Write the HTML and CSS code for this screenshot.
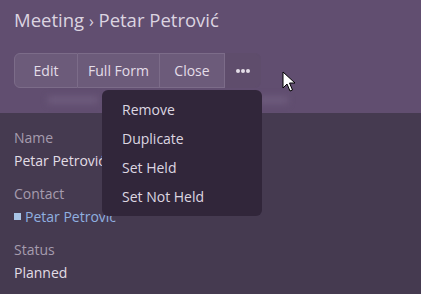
FILE: index.html
```html
<!DOCTYPE html>
<html lang="en">
  <head>
    <meta charset="UTF-8" />
    <title>Meeting - Petar Petrović</title>
    <link rel="stylesheet" href="styles.css">
  </head>
  <body>
    <!-- Header -->
    <div class="page-header">
      <h3 class="title">Meeting <span class="sep">›</span> Petar Petrović</h3>
      <div class="actions">
        <div class="btn-group">
          <button class="btn">Edit</button>
          <button class="btn">Full Form</button>
          <button class="btn">Close</button>
          <button class="btn btn-more active"><span class="dot"></span><span class="dot"></span><span class="dot"></span></button>
          <ul class="dropdown-menu">
            <li>Remove</li>
            <li>Duplicate</li>
            <li>Set Held</li>
            <li>Set Not Held</li>
          </ul>
        </div>
      </div>
      <!-- blurred tab row behind the menu -->
      <div class="ghost">
        <span class="blob" style="width: 50px"></span>
        <span class="blob" style="width: 30px; margin-left: 160px"></span>
      </div>
    </div>

    <!-- Record -->
    <div class="record">
      <div class="cell">
        <div class="label">Name</div>
        <div class="value">Petar Petrović</div>
      </div>
      <div class="cell">
        <div class="label">Contact</div>
        <div class="value link"><span class="square"></span>Petar Petrović</div>
      </div>
      <div class="cell">
        <div class="label">Status</div>
        <div class="value">Planned</div>
      </div>
    </div>

    <svg class="cursor" width="14" height="22" viewBox="0 0 14 22">
      <path d="M1 1 L1 17 L5 13 L8 20 L10.5 19 L7.5 12 L13 12 Z" fill="#fff" stroke="#000" stroke-width="1" stroke-linejoin="round"/>
    </svg>
  </body>
</html>
```

FILE: styles.css
```css
* {
  margin: 0;
  padding: 0;
  box-sizing: border-box;
}

body {
  font-family: "Open Sans", "Liberation Sans", sans-serif;
  background: #453a50;
  color: #e0dbe4;
  width: 421px;
  height: 294px;
  overflow: hidden;
  position: relative;
}

.page-header {
  background: #614e70;
  height: 113px;
  padding: 6px 14px 0;
  position: relative;
}

.title {
  font-size: 18.5px;
  font-weight: 400;
  color: #dcd4e0;
  line-height: 28px;
}

.title .sep {
  font-size: 16px;
}

.actions {
  margin-top: 18px;
  display: flex;
}

.btn-group {
  display: flex;
  position: relative;
  z-index: 2;
}

.btn {
  font-family: inherit;
  font-size: 14px;
  color: #e4dde8;
  background: #6c5b7a;
  border: 1px solid #7c6c89;
  border-left-width: 0;
  height: 35px;
  padding: 0 10px;
  cursor: pointer;
}

.btn:first-child {
  border-left-width: 1px;
  border-radius: 6px 0 0 6px;
  width: 64px;
}

.btn:nth-child(2) {
  width: 82px;
}

.btn:nth-child(3) {
  width: 65px;
}

.btn-more {
  width: 36px;
  background: #5f4d6c;
  border-color: #5f4d6c;
  border-radius: 0 6px 6px 0;
  display: flex;
  align-items: center;
  justify-content: center;
  gap: 1px;
}

.dot {
  width: 4px;
  height: 4px;
  border-radius: 50%;
  background: #e4dde8;
}

.dropdown-menu {
  list-style: none;
  position: absolute;
  top: 37px;
  right: -1px;
  width: 160px;
  background: #31263a;
  border-radius: 6px;
  padding: 5px 0 5px;
}

.dropdown-menu li {
  font-size: 14px;
  line-height: 19px;
  padding: 5px 20px;
  color: #ddd6e1;
}

.ghost {
  position: absolute;
  left: 48px;
  top: 96px;
  display: flex;
  filter: blur(3px);
}

.blob {
  height: 8px;
  background: #6d5b7c;
}

.record {
  padding: 15px 14px 0;
}

.cell {
  margin-bottom: 12px;
}

.label {
  font-size: 14px;
  line-height: 19px;
  color: #a69cae;
}

.value {
  font-size: 14px;
  line-height: 23px;
  margin-top: 2px;
  color: #e2dde6;
}

.link {
  color: #90b0e0;
  display: flex;
  align-items: center;
}

.square {
  width: 7px;
  height: 7px;
  background: #a8c4e6;
  margin-right: 4px;
}

.cursor {
  position: absolute;
  left: 282px;
  top: 71px;
}
```
